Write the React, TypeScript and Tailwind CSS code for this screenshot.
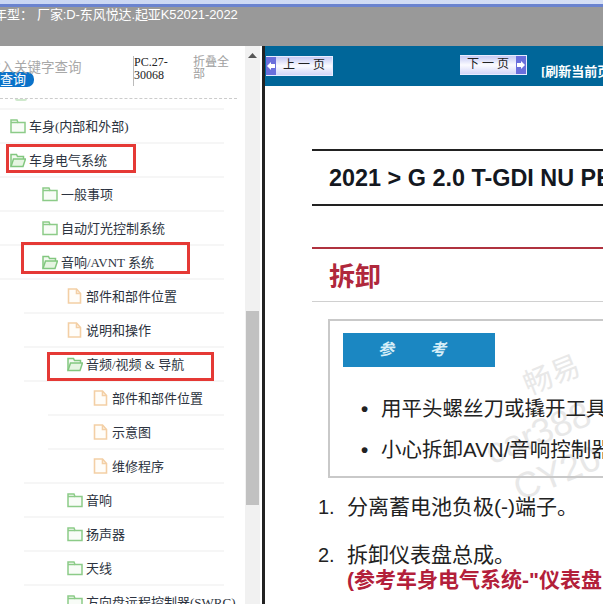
type Kind = 'closed' | 'open' | 'file';

const rows: { label: string; level: number; kind: Kind; line: number }[] = [
  { label: '车身(内部和外部)', level: 0, kind: 'closed', line: 0 },
  { label: '车身电气系统', level: 0, kind: 'open', line: 0 },
  { label: '一般事项', level: 1, kind: 'closed', line: 0 },
  { label: '自动灯光控制系统', level: 1, kind: 'closed', line: 0 },
  { label: '音响/AVNT 系统', level: 1, kind: 'open', line: 0 },
  { label: '部件和部件位置', level: 2, kind: 'file', line: 24 },
  { label: '说明和操作', level: 2, kind: 'file', line: 24 },
  { label: '音频/视频 & 导航', level: 2, kind: 'open', line: 24 },
  { label: '部件和部件位置', level: 3, kind: 'file', line: 48 },
  { label: '示意图', level: 3, kind: 'file', line: 48 },
  { label: '维修程序', level: 3, kind: 'file', line: 24 },
  { label: '音响', level: 2, kind: 'closed', line: 24 },
  { label: '扬声器', level: 2, kind: 'closed', line: 24 },
  { label: '天线', level: 2, kind: 'closed', line: 24 },
  { label: '方向盘远程控制器(SWRC)', level: 2, kind: 'closed', line: 24 },
];

function TreeIcon({ kind }: { kind: Kind }) {
  if (kind === 'file') {
    return (
      <svg width="15" height="16" viewBox="0 0 15 16" fill="#fffdf9" stroke="#f3cfa5" strokeWidth="1.6" className="shrink-0">
        <path d="M1.5 1h8l4 4.5V15h-12z" />
        <path d="M9.5 1v4.5h4" fill="none" />
      </svg>
    );
  }
  if (kind === 'open') {
    return (
      <svg width="16" height="15" viewBox="0 0 16 15" fill="none" stroke="#82c77f" strokeWidth="1.5" className="shrink-0">
        <path d="M1 13.5V1.5h5.5l1 2h6v2.5" fill="#f3faf1" />
        <path d="M1 13.5l2.5-7.5H15.5l-2.5 7.5z" fill="#e6f5e2" />
      </svg>
    );
  }
  return (
    <svg width="16" height="15" viewBox="0 0 16 15" fill="#f8fcf7" stroke="#8ccb88" strokeWidth="1.5" className="shrink-0">
      <path d="M1 13.5V1h6l1 2.5h7v10z" />
      <path d="M1 3.5h7" fill="none" />
    </svg>
  );
}

function TreeRow({ label, level, kind, line }: { label: string; level: number; kind: Kind; line: number }) {
  const pad = ['pl-[10px]', 'pl-[42px]', 'pl-[67px]', 'pl-[93px]'][level];
  const border = line === 48 ? 'ml-[48px] w-[176px]' : line === 24 ? 'ml-[24px] w-[200px]' : 'w-[224px]';
  const textPad = kind === 'file' ? 'gap-[4px]' : 'gap-[3px]';
  return (
    <div className={`h-[34px] border-b-2 border-[#f6f6f6] ${border}`}>
      <div className={`flex h-full items-center whitespace-nowrap ${textPad} ${pad} ${line === 48 ? '-ml-[48px]' : line === 24 ? '-ml-[24px]' : ''}`}>
        <TreeIcon kind={kind} />
        <span className="text-[13px] leading-none text-[#2c3340]">{label}</span>
      </div>
    </div>
  );
}

function PageButton({ label, dir }: { label: string; dir: 'prev' | 'next' }) {
  const arrow = (
    <span className="flex h-full w-[10px] shrink-0 items-center justify-center bg-[#6a6fdc]">
      <svg width="8" height="8" viewBox="0 0 8 8" fill="#ffffff">
        <path d={dir === 'prev' ? 'M0 4l4-4v2h4v4H4v2z' : 'M8 4L4 0v2H0v4h4v2z'} />
      </svg>
    </span>
  );
  return (
    <div className="flex h-[20px] w-[67px] shrink-0 items-stretch overflow-hidden border-b border-r border-t border-[#e8ecff] bg-gradient-to-b from-[#c5c9f3] via-[#fbfbff] to-[#d3d6f8]">
      {dir === 'prev' && arrow}
      <span className="flex-1 whitespace-nowrap text-center text-[12px] leading-[17px] text-[#222] [font-family:'Liberation_Serif','Noto_Sans_CJK_SC',serif]">
        {label}
      </span>
      {dir === 'next' && arrow}
    </div>
  );
}

export default function App() {
  return (
    <div className="relative h-[604px] w-[603px] overflow-hidden bg-white [font-family:'Liberation_Serif','Noto_Sans_CJK_SC',serif]">
      <div className="h-[4px] bg-gradient-to-r from-[#c9d6f3] to-[#d5dff5]" />
      <div className="h-[3px] bg-[#6a83cf]" />
      <div className="h-[39px] overflow-hidden whitespace-nowrap bg-[#999999] pt-[1px] text-[13px] leading-[14px] text-white [font-family:'Liberation_Sans','Noto_Sans_CJK_SC',sans-serif]">
        <span className="-ml-[6px] inline-block">年型：</span>
        <span className="ml-[4px] inline-block tracking-[-0.1px]">厂家:D-东风悦达.起亚K52021-2022</span>
      </div>

      <div className="flex h-[558px]">
        <aside className="relative w-[245px] shrink-0 overflow-hidden">
          <div className="flex h-[53px] w-[237px] border-b border-dashed border-[#cccccc]">
            <div className="w-[133px] shrink-0 pt-[13px] text-[13.5px] leading-[14px] text-[#a8a8a8] [font-family:'Noto_Sans_CJK_SC',sans-serif]">
              <div className="-ml-[13px] h-[14px] whitespace-nowrap">输入关键字查询</div>
              <div className="-mt-[1px] h-[15px] w-[34px] rounded-r-[7px] bg-[#0b72c9] text-[13px] leading-[14px] text-white">查询</div>
            </div>
            <div className="mt-[10px] h-[30px] w-[60px] shrink-0 border-l border-[#bbbbbb] text-[12px] leading-[12.5px] text-[#222]">
              PC.27-
              <br />
              30068
            </div>
            <div className="mt-[9px] w-[37px] shrink-0 text-[12px] leading-[12px] text-[#a0a0a0] [font-family:'Noto_Sans_CJK_SC',sans-serif]">折叠全部</div>
          </div>
          <div className="relative h-[11px] w-[224px] border-b-2 border-[#f6f6f6]">
            <div className="absolute left-[15px] top-0 h-[2px] w-[12px] rounded-b-[2px] bg-[#cfe9cd]" />
          </div>
          {rows.map((r, i) => (
            <TreeRow key={i} {...r} />
          ))}
          <div className="absolute left-[6px] top-[98px] h-[29px] w-[130px] border-[3px] border-[#e53935]" />
          <div className="absolute left-[21px] top-[196px] h-[32px] w-[169px] border-[3px] border-[#e53935]" />
          <div className="absolute left-[47px] top-[306px] h-[29px] w-[167px] border-[3px] border-[#e53935]" />
        </aside>

        <div className="relative w-[15px] shrink-0 bg-[#f1f1f1]">
          <svg width="9" height="5" viewBox="0 0 9 5" fill="#555555" className="mx-auto mt-[7px]">
            <path d="M4.5 0L9 5H0z" />
          </svg>
          <div className="absolute left-[1px] top-[265px] h-[194px] w-[13px] bg-[#c1c1c1]" />
        </div>
        <div className="w-[2px] shrink-0 bg-white" />
        <div className="w-[3px] shrink-0 bg-[#222]" />

        <main className="relative min-w-0 flex-1 overflow-hidden">
          <div className="pointer-events-none absolute inset-0 text-[#e8e8e8] [font-family:'Liberation_Sans','Noto_Sans_CJK_SC',sans-serif]">
            <span className="absolute left-[258px] top-[308px] -rotate-[22deg] text-[29px]">畅易</span>
            <span className="absolute left-[218px] top-[360px] -rotate-[22deg] text-[36px]">car388</span>
            <span className="absolute left-[247px] top-[400px] -rotate-[22deg] text-[36px]">CY20</span>
          </div>

          <div className="relative flex h-[40px] items-start whitespace-nowrap bg-[#006699] pl-[1px] pt-[10px]">
            <PageButton label="上 一 页" dir="prev" />
            <div className="-mt-[1px] ml-[127px] shrink-0">
              <PageButton label="下 一 页" dir="next" />
            </div>
            <span className="ml-[14px] mt-[9px] shrink-0 text-[13px] font-bold leading-[13px] text-white">[刷新当前页]</span>
          </div>

          <div className="relative w-[600px] pl-[47px] pt-[63px]">
            <div className="flex h-[57px] items-center whitespace-nowrap border-y-2 border-[#222] pl-[17px] pt-[2px] text-[23.4px] font-bold text-[#14181f] [font-family:'Liberation_Sans',sans-serif]">
              2021 &gt; G 2.0 T-GDI NU PE
            </div>

            <div className="mt-[41px] flex h-[55px] items-center border-y border-[#d0d0d0] border-t-2 border-t-[#b0323f] pb-[2px] pl-[17px] text-[26px] font-bold text-[#b0283c] [font-family:'Noto_Sans_CJK_SC',sans-serif]">
              拆卸
            </div>

            <div className="ml-[16px] mt-[17px] h-[159px] border-2 border-[#c9c9c9] pl-[13px] pt-[12px] [font-family:'Liberation_Sans','Noto_Sans_CJK_SC',sans-serif]">
              <div className="flex h-[34px] w-[152px] items-center justify-center gap-[36px] bg-[#1b87c2] pr-[14px] text-[16px] font-bold italic text-[#d6eef8]">
                <span>参</span>
                <span>考</span>
              </div>
              <ul className="mt-[21px] whitespace-nowrap pl-[18px] text-[20.5px] leading-[41px] text-[#222]">
                <li className="flex">
                  <span className="w-[20px] font-bold">•</span>用平头螺丝刀或撬开工具
                </li>
                <li className="flex">
                  <span className="w-[20px] font-bold">•</span>小心拆卸AVN/音响控制器
                </li>
              </ul>
            </div>

            <ol className="mt-[14px] whitespace-nowrap text-[21px] text-[#222] [font-family:'Liberation_Sans','Noto_Sans_CJK_SC',sans-serif]">
              <li className="flex h-[30px] items-center pl-[6px]">
                <span className="w-[29px] text-[20px]">1.</span>分离蓄电池负极(-)端子。
              </li>
              <li className="mt-[18px] flex h-[30px] items-center pl-[6px]">
                <span className="w-[29px] text-[20px]">2.</span>拆卸仪表盘总成。
              </li>
              <li className="-mt-[3px] pl-[35px] font-bold leading-[26px] text-[#b3203a]">(参考车身电气系统-"仪表盘</li>
            </ol>
          </div>
        </main>
      </div>
    </div>
  );
}
